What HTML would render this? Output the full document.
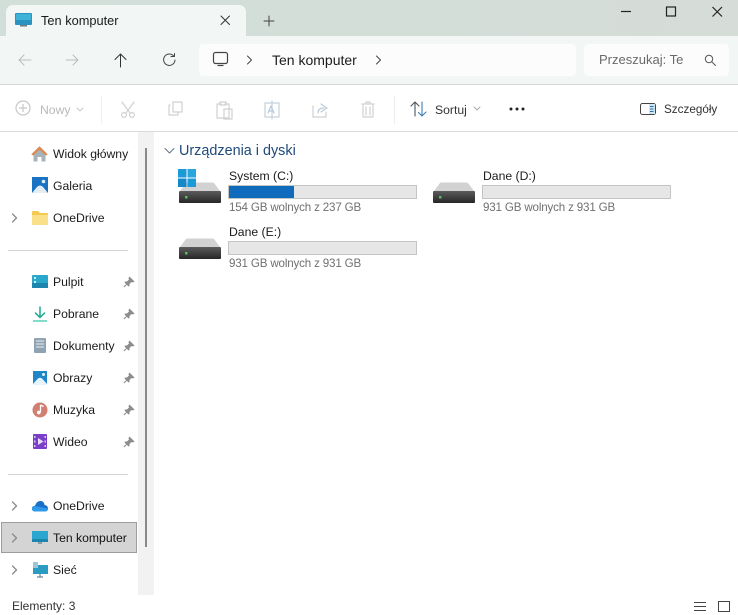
<!DOCTYPE html>
<html lang="pl"><head><meta charset="utf-8"><title>Ten komputer</title>
<style>
html,body{margin:0;padding:0;width:738px;height:615px;overflow:hidden;background:#fff;font-family:"Liberation Sans",sans-serif;color:#1b1b1b}
.a{position:absolute}
.t{position:absolute;white-space:nowrap;font-size:12.200px;line-height:16px}
.g{font-size:11.600px;letter-spacing:-.17px;color:#707070}
svg{position:absolute;overflow:visible}
.s{fill:none;stroke-linecap:round;stroke-linejoin:round}
</style></head><body>
<!-- title bar -->
<div class="a" style="left:0;top:0;width:738px;height:36px;background:linear-gradient(90deg,#d2dfd9,#d3ded9 50%,#d6dcd8)"></div>
<div class="a" style="left:0;top:36px;width:738px;height:48px;background:#f2f6f4;border-bottom:1px solid #d6d8d7"></div>
<!-- tab -->
<div class="a" style="left:6px;top:5px;width:240px;height:31px;background:#f2f6f4;border-radius:7px 7px 0 0"></div>
<svg style="left:15px;top:13px" width="17" height="15"><rect x="0" y="0" width="17" height="12" rx="1" fill="#2a93bf"/><rect x="1" y="1" width="15" height="6" fill="#3db2d8"/><rect x="5" y="12" width="7" height="1.500" fill="#6c7a82"/></svg>
<div class="t" style="left:41px;top:13px;font-size:12.800px">Ten komputer</div>
<svg style="left:220px;top:15px" width="11" height="11"><path class="s" stroke="#333" d="M1 1L9.500 9.500M9.500 1L1 9.500"/></svg>
<svg style="left:263px;top:15px" width="12" height="12"><path class="s" stroke="#444" d="M6 1V11M1 6H11"/></svg>
<!-- window buttons -->
<svg style="left:620px;top:6px" width="110" height="14"><path stroke="#222" stroke-width="1.200" d="M1 5.500H11"/><rect x="46.500" y="1" width="9" height="9" fill="none" stroke="#222" stroke-width="1.200"/><path stroke="#222" stroke-width="1.200" d="M92.500 1L102 10.500M102 1L92.500 10.500"/></svg>
<!-- nav -->
<svg style="left:18px;top:52px" width="170" height="16">
<path class="s" stroke="#b9bebc" d="M1 8H13M1 8L6 3M1 8L6 13"/>
<path class="s" stroke="#b9bebc" d="M48 8H60M60 8L55 3M60 8L55 13"/>
<path class="s" stroke="#333" d="M102.500 15V2M102.500 2L97 7.500M102.500 2L108 7.500"/>
<path class="s" stroke="#444" d="M156 4.500A5.700 5.700 0 1 0 157 8M153 4.500L156.500 4.500L156.500 1.500"/>
</svg>
<!-- address bar -->
<div class="a" style="left:199px;top:44px;width:377px;height:32px;background:#fbfcfb;border-radius:4px"></div>
<svg style="left:212px;top:51px" width="18" height="16"><rect x="1.500" y="1.500" width="14" height="11" rx="2" fill="none" stroke="#444" stroke-width="1.200"/><path stroke="#444" stroke-width="1.200" d="M5.500 14.500H11.500"/></svg>
<svg style="left:246px;top:55px" width="8" height="10"><path class="s" stroke="#444" d="M1.500 1L5.500 5L1.500 9"/></svg>
<div class="t" style="left:272px;top:52px;font-size:14px">Ten komputer</div>
<svg style="left:375px;top:55px" width="8" height="10"><path class="s" stroke="#444" d="M1.500 1L5.500 5L1.500 9"/></svg>
<!-- search -->
<div class="a" style="left:584px;top:44px;width:145px;height:32px;background:#fbfcfb;border-radius:4px"></div>
<div class="t" style="left:599px;top:52px;font-size:13px;color:#6a6a6a">Przeszukaj: Te</div>
<svg style="left:704px;top:54px" width="13" height="13"><circle cx="5" cy="5" r="3.700" fill="none" stroke="#555"/><path class="s" stroke="#555" d="M8 8L11.500 11.500"/></svg>
<!-- toolbar -->
<div class="a" style="left:0;top:131px;width:738px;height:1px;background:#d9d9d9"></div>
<svg style="left:15px;top:100px" width="360" height="20">
<circle cx="8" cy="8" r="7" fill="none" stroke="#c8c8c8" stroke-width="1.200"/><path stroke="#c8c8c8" stroke-width="1.200" d="M8 4V12M4 8H12"/>
<path class="s" stroke="#c8c8c8" d="M62 8L65 11L68 8"/>
<path class="s" stroke="#cfcfcf" stroke-width="1.200" d="M107 2L115 13M119 2L111 13"/><circle cx="109" cy="15" r="2.400" fill="none" stroke="#cfcfcf" stroke-width="1.200"/><circle cx="117" cy="15" r="2.400" fill="none" stroke="#cfcfcf" stroke-width="1.200"/>
<path class="s" stroke="#d0d0d0" stroke-width="1.200" d="M155 5H154Q154 5 154 6V15H163V12M158 2H167V12H158Z"/>
<path class="s" stroke="#d0d0d0" stroke-width="1.200" d="M206 4H202V18H214V4H210M205 2H211V5H205ZM209 9H217V19H209Z"/>
<path class="s" stroke="#c5d0da" stroke-width="1.200" d="M250 3H264V17H250ZM257 1V19"/><path class="s" stroke="#b5c9dc" stroke-width="1.200" d="M253 13L256 6L259 13M254 11H258"/>
<path class="s" stroke="#d0d0d0" stroke-width="1.200" d="M298 6V17H311V12"/><path class="s" stroke="#bccbd9" stroke-width="1.200" d="M303 13Q303 8 309 8M306 4L312 8L306 12"/>
<path class="s" stroke="#d0d0d0" stroke-width="1.200" d="M347 4H359M351 4V2H355V4M348 5V17H358V5M351 7V15M355 7V15"/>
</svg>
<div class="t" style="left:40px;top:102px;font-size:12.200px;color:#b8b8b8">Nowy</div>
<div class="a" style="left:101px;top:96px;width:1px;height:28px;background:#f0f0f0"></div>
<div class="a" style="left:394px;top:96px;width:1px;height:28px;background:#ececec"></div>
<svg style="left:410px;top:101px" width="18" height="16"><path class="s" stroke="#4a5560" stroke-width="1.100" d="M5 15V1M5 1L1 5M5 1L9 5"/><path class="s" stroke="#3d7fb5" stroke-width="1.100" d="M12 1V15M12 15L8.500 11.500M12 15L16 11"/></svg>
<div class="t" style="left:435px;top:102px;font-size:12.200px;color:#333">Sortuj</div>
<svg style="left:473px;top:106px" width="8" height="6"><path class="s" stroke="#aaa" d="M1 1L4 4L7 1"/></svg>
<svg style="left:509px;top:107px" width="18" height="4"><circle cx="2" cy="2" r="1.500" fill="#222"/><circle cx="8" cy="2" r="1.500" fill="#222"/><circle cx="14" cy="2" r="1.500" fill="#222"/></svg>
<svg style="left:640px;top:103px" width="17" height="13"><rect x="0.500" y="0.500" width="15" height="11" rx="2" fill="#fff" stroke="#444"/><rect x="9" y="1" width="6" height="10" fill="#cfe6f5"/><path stroke="#2a6fa8" d="M10 3.500H13.500M10 6H13.500M10 8.500H13.500"/></svg>
<div class="t" style="left:664px;top:102px;font-size:11.700px;color:#333">Szczegóły</div>
<!-- scrollbar -->
<div class="a" style="left:138px;top:132px;width:16px;height:463px;background:#f2f2f2"></div>
<div class="a" style="left:145px;top:148px;width:2px;height:399px;background:#8a8a8a"></div>
<!-- sidebar -->
<svg style="left:31px;top:146px" width="18" height="18"><path d="M2.500 8.500L8.500 3.500L14.500 8.500V15.500H10.500V11H6.500V15.500H2.500Z" fill="#a9b2b8"/><path d="M0.300 8.200L8.500 0.300L16.700 8.200L15 9.500L8.500 3.800L2 9.500Z" fill="#d98a52"/></svg>
<div class="t" style="left:53px;top:146px">Widok główny</div>
<svg style="left:32px;top:177px" width="16" height="17"><rect width="16" height="16" fill="#1a73c2"/><path d="M0 16L5 10Q8 7 11 10L16 16Z" fill="#e6eef4"/><circle cx="11.500" cy="4.500" r="1.800" fill="#dcecf8"/></svg>
<div class="t" style="left:53px;top:178px">Galeria</div>
<svg style="left:11px;top:213px" width="7" height="10"><path class="s" stroke="#8a8a8a" stroke-width="1.300" d="M1.500 1L5.500 5L1.500 9"/></svg>
<svg style="left:32px;top:211px" width="16" height="14"><path d="M0 1Q0 0 1 0H6L8 2H15Q16 2 16 3V13Q16 14 15 14H1Q0 14 0 13Z" fill="#f3c94f"/><path d="M0 4H16V13Q16 14 15 14H1Q0 14 0 13Z" fill="#fbe08a"/></svg>
<div class="t" style="left:53px;top:210px">OneDrive</div>
<div class="a" style="left:8px;top:250px;width:120px;height:1px;background:#d5d5d5"></div>
<svg style="left:32px;top:275px" width="16" height="14"><rect width="16" height="13" rx="1" fill="#29a8cc"/><rect width="16" height="5" y="8" fill="#1d86b0"/><rect x="2" y="2" width="2" height="2" fill="#d8f2f8"/><rect x="2" y="6" width="2" height="2" fill="#d8f2f8"/></svg>
<div class="t" style="left:53px;top:274px">Pulpit</div>
<svg style="left:33px;top:306px" width="14" height="17"><path class="s" stroke="#1aa88e" stroke-width="1.500" d="M7 1V11M2.500 7L7 11.500L11.500 7"/><path stroke="#58d0b4" stroke-width="1.500" d="M0 15H14"/></svg>
<div class="t" style="left:53px;top:306px">Pobrane</div>
<svg style="left:34px;top:338px" width="13" height="16"><rect width="12" height="15" rx="1" fill="#8fa3b3"/><path stroke="#e9eef2" d="M2 3H10M2 6H10M2 9H10"/></svg>
<div class="t" style="left:53px;top:338px">Dokumenty</div>
<svg style="left:33px;top:371px" width="14" height="14"><rect width="14" height="14" fill="#1f86c8"/><path d="M0 13L5 7.500Q7 6 9 7.500L14 13V14H0Z" fill="#e8f3fa"/><circle cx="10.500" cy="3.500" r="1.500" fill="#e0f0fa"/></svg>
<div class="t" style="left:53px;top:370px">Obrazy</div>
<svg style="left:32px;top:402px" width="16" height="16"><circle cx="8" cy="8" r="7.500" fill="#d17f70"/><path d="M8.500 3V10" stroke="#fff" stroke-width="1.300"/><path d="M8.500 3L11.500 4.500" stroke="#fff" stroke-width="1.300"/><circle cx="6.800" cy="10.500" r="1.900" fill="#fff"/></svg>
<div class="t" style="left:53px;top:402px">Muzyka</div>
<svg style="left:33px;top:434px" width="14" height="15"><rect width="14" height="15" rx="1" fill="#7a3fc9"/><path d="M5 4L10.500 7.500L5 11Z" fill="#e9dcfb"/><rect x="1" y="2" width="1.500" height="2" fill="#d8c5f5"/><rect x="1" y="6.500" width="1.500" height="2" fill="#d8c5f5"/><rect x="1" y="11" width="1.500" height="2" fill="#d8c5f5"/><rect x="11.500" y="2" width="1.500" height="2" fill="#d8c5f5"/><rect x="11.500" y="6.500" width="1.500" height="2" fill="#d8c5f5"/><rect x="11.500" y="11" width="1.500" height="2" fill="#d8c5f5"/></svg>
<div class="t" style="left:53px;top:434px">Wideo</div>
<svg style="left:123px;top:276px" width="12" height="170" fill="#8c8c8c">
<defs><g id="p"><path d="M6.500 0.500L11.500 5.500L10 6.500L8.500 6L6.500 8L6.500 10L5.500 10.500L1.500 6.500L2 5.500L4 5.500L6 3.500L5.500 2Z"/><path d="M3.500 8.500L0.800 11" stroke="#8c8c8c" fill="none"/></g></defs>
<use href="#p"/><use href="#p" y="32"/><use href="#p" y="64"/><use href="#p" y="96"/><use href="#p" y="128"/><use href="#p" y="160"/>
</svg>
<div class="a" style="left:8px;top:474px;width:120px;height:1px;background:#d5d5d5"></div>
<svg style="left:11px;top:501px" width="7" height="74"><g class="s" stroke="#8a8a8a" stroke-width="1.300"><path d="M1.500 1L5.500 5L1.500 9"/><path d="M1.500 33L5.500 37L1.500 41"/><path d="M1.500 65L5.500 69L1.500 73"/></g></svg>
<svg style="left:32px;top:500px" width="16" height="12"><path d="M3.500 11.500Q0 11.500 0 8.500Q0 6 3 5.800Q4.500 1 8.500 1Q12 1 12.500 5Q16 5.500 16 8.500Q16 11.500 12.500 11.500Z" fill="#1a70c8"/><path d="M3.500 11.500Q0 11.500 0 8.500Q0 6.500 3 6Q8 7 16 8.500Q16 11.500 12.500 11.500Z" fill="#2f9be8"/></svg>
<div class="t" style="left:53px;top:498px">OneDrive</div>
<div class="a" style="left:1px;top:522px;width:134px;height:29px;background:#d4d4d4;border:1px solid #9c9c9c"></div>
<svg style="left:11px;top:533px" width="7" height="10"><path class="s" stroke="#8a8a8a" stroke-width="1.300" d="M1.500 1L5.500 5L1.500 9"/></svg>
<svg style="left:32px;top:531px" width="17" height="15"><rect width="16" height="11" fill="#2aa7d1"/><rect width="16" height="3" y="8" fill="#1c85ad"/><path d="M6 11H10V13H6Z" fill="#8a9aa3"/></svg>
<div class="t" style="left:53px;top:530px;color:#111">Ten komputer</div>
<svg style="left:32px;top:562px" width="17" height="16"><rect x="1" y="3" width="15" height="9" fill="#2a9cc4"/><path d="M8 12V15M5 15H11" stroke="#6d8793" stroke-width="1.200"/><rect x="1" y="0" width="5" height="6" fill="#9cc7d8"/></svg>
<div class="t" style="left:53px;top:562px">Sieć</div>
<!-- content -->
<svg style="left:164px;top:147px" width="11" height="8"><path class="s" stroke="#5d7388" d="M1 1.500L5.500 6L10 1.500"/></svg>
<div class="t" style="left:179px;top:142px;font-size:14.400px;line-height:18px;color:#1f4a7a">Urządzenia i dyski</div>
<svg width="0" height="0" style="left:0;top:0"><defs>
<linearGradient id="b" x1="0" y1="0" x2="0" y2="1"><stop offset="0" stop-color="#5c5c5c"/><stop offset="1" stop-color="#262626"/></linearGradient>
<g id="d"><path d="M1 9L7 1Q7.500 0.500 8.500 0.500H33.500Q34.500 0.500 35 1L41 9Z" fill="#d2d2d2"/><rect x="0" y="9" width="42" height="12" rx="1" fill="url(#b)"/><rect x="6" y="14" width="2.500" height="2.500" fill="#54c05a"/></g></defs></svg>
<svg style="left:179px;top:182px" width="42" height="22"><use href="#d"/></svg>
<svg style="left:178px;top:169px" width="18" height="18"><rect width="8.500" height="8.500" fill="#1a9ad6"/><rect x="9.500" width="8.500" height="8.500" fill="#2aa6dc"/><rect y="9.500" width="8.500" height="8.500" fill="#1488c8"/><rect x="9.500" y="9.500" width="8.500" height="8.500" fill="#1a9ad6"/></svg>
<div class="t" style="left:229px;top:168px">System (C:)</div>
<div class="a" style="left:228px;top:185px;width:187px;height:12px;background:#e6e6e6;border:1px solid #c4c4c4"></div>
<div class="a" style="left:229px;top:186px;width:65px;height:12px;background:#0f6cbd"></div>
<div class="t g" style="left:229px;top:200px">154 GB wolnych z 237 GB</div>
<svg style="left:433px;top:182px" width="42" height="22"><use href="#d"/></svg>
<div class="t" style="left:483px;top:168px">Dane (D:)</div>
<div class="a" style="left:482px;top:185px;width:187px;height:12px;background:#e6e6e6;border:1px solid #c4c4c4"></div>
<div class="t g" style="left:483px;top:200px">931 GB wolnych z 931 GB</div>
<svg style="left:179px;top:238px" width="42" height="22"><use href="#d"/></svg>
<div class="t" style="left:229px;top:224px">Dane (E:)</div>
<div class="a" style="left:228px;top:241px;width:187px;height:12px;background:#e6e6e6;border:1px solid #c4c4c4"></div>
<div class="t g" style="left:229px;top:256px">931 GB wolnych z 931 GB</div>
<!-- status -->
<div class="t" style="left:12px;top:598px;color:#333;font-size:12px">Elementy: 3</div>
<svg style="left:693px;top:600px" width="38" height="14"><path stroke="#444" d="M1 2.500H13M1 6.500H13M1 10.500H13"/><rect x="25.500" y="1.500" width="11" height="10" fill="none" stroke="#444"/></svg>
</body></html>
